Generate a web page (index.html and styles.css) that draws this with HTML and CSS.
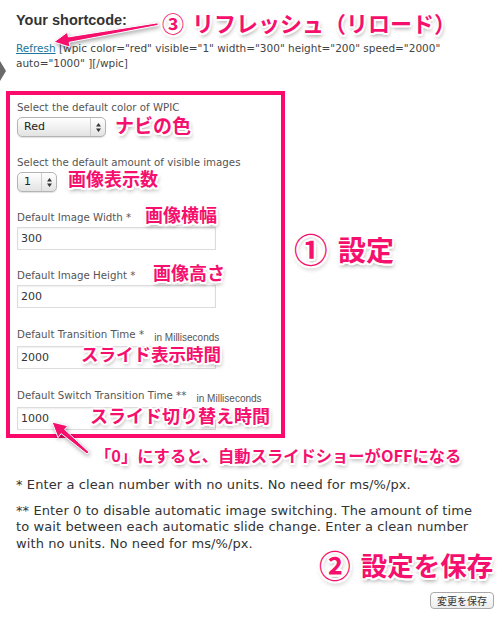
FILE: index.html
```html
<!DOCTYPE html>
<html lang="ja">
<head>
<meta charset="utf-8">
<title>WPIC settings</title>
<link rel="stylesheet" href="styles.css">
</head>
<body>
<div class="page">
  <span class="edge-tab"></span>
  <h3 class="title">Your shortcode:</h3>
  <p class="shortcode"><a href="#">Refresh</a> [wpic color="red" visible="1" width="300" height="200" speed="2000" auto="1000" ][/wpic]</p>

  <div class="settings">
    <div class="field">
      <label class="lbl">Select the default color of WPIC</label>
      <div class="sel sel-color"><span class="sel-val">Red</span><span class="sel-arrows"><svg width="5" height="9" viewBox="0 0 5 9"><path d="M0 3.6 2.5 0 5 3.6Z M0 5.4 2.5 9 5 5.4Z" fill="#333"/></svg></span></div>
    </div>
    <div class="field">
      <label class="lbl">Select the default amount of visible images</label>
      <div class="sel sel-num"><span class="sel-val">1</span><span class="sel-arrows"><svg width="5" height="9" viewBox="0 0 5 9"><path d="M0 3.6 2.5 0 5 3.6Z M0 5.4 2.5 9 5 5.4Z" fill="#333"/></svg></span></div>
    </div>
    <div class="field">
      <label class="lbl">Default Image Width *</label>
      <input class="txt" type="text" value="300">
    </div>
    <div class="field">
      <label class="lbl">Default Image Height *</label>
      <input class="txt" type="text" value="200">
    </div>
    <div class="field">
      <label class="lbl lbl-ms">Default Transition Time * <span class="ms">in Milliseconds</span></label>
      <input class="txt" type="text" value="2000">
    </div>
    <div class="field">
      <label class="lbl lbl-ms">Default Switch Transition Time ** <span class="ms">in Milliseconds</span></label>
      <input class="txt" type="text" value="1000">
    </div>
  </div>

  <p class="help help-first">* Enter a clean number with no units. No need for ms/%/px.</p>
  <p class="help">** Enter 0 to disable automatic image switching. The amount of time to wait between each automatic slide change. Enter a clean number with no units. No need for ms/%/px.</p>

  <div class="actions"><button class="btn" type="button">変更を保存</button></div>

  <svg class="arrows" width="502" height="620" viewBox="0 0 502 620">
    <path d="M158.2 25.3 L69.2 42.3 L70.2 47.2 L54 42 L67.4 32.2 L68.4 36.9 L157.8 22.8 Z"/>
    <path d="M88.9 452 L64.6 429.4 L67.8 425.8 L52 422 L58 437.6 L61.1 433.6 L87.1 454 Z"/>
  </svg>

  <div class="note note-refresh"><span class="num">③</span> リフレッシュ（リロード）</div>
  <div class="note note-navi">ナビの色</div>
  <div class="note note-count">画像表示数</div>
  <div class="note note-width">画像横幅</div>
  <div class="note note-height">画像高さ</div>
  <div class="note note-speed">スライド表示時間</div>
  <div class="note note-switch">スライド切り替え時間</div>
  <div class="note note-big note-setting"><span class="num">①</span> 設定</div>
  <div class="note note-zero">「0」にすると、自動スライドショーがOFFになる</div>
  <div class="note note-big note-save"><span class="num">②</span> 設定を保存</div>
</div>
</body>
</html>
```

FILE: styles.css
```css
html, body {
  margin: 0;
  padding: 0;
  background: #fff;
}

body {
  font-family: "DejaVu Sans", "Noto Sans CJK JP", sans-serif;
  color: #333;
}

.page {
  position: relative;
  width: 502px;
  height: 620px;
  box-sizing: border-box;
  padding: 12px 8px 0 16px;
  overflow: hidden;
}

.edge-tab {
  position: absolute;
  left: 0;
  top: 61px;
  width: 0;
  height: 0;
  border-left: 6px solid #6a6a6a;
  border-top: 10px solid transparent;
  border-bottom: 10px solid transparent;
}

.title {
  margin: 0;
  font-family: "Liberation Sans", Arial, sans-serif;
  font-size: 14.5px;
  line-height: 16px;
  font-weight: bold;
  color: #333;
}

.shortcode {
  margin: 12.5px 0 0;
  font-size: 10.5px;
  line-height: 15px;
  color: #444;
}

.shortcode a {
  color: #21759b;
  text-decoration: underline;
}

.settings {
  margin: 20.5px 0 0 -10px;
  width: 279px;
  box-sizing: border-box;
  border: 4px solid #fc0a6b;
  padding: 5px 0 4px 7px;
}

.field + .field {
  margin-top: 18px;
}

.lbl {
  display: block;
  font-size: 10.25px;
  line-height: 14px;
  height: 14px;
  color: #555;
  margin-bottom: 3px;
  white-space: nowrap;
}

.lbl-ms {
  padding-top: 1px;
  margin-bottom: 5px;
}

.ms {
  font-family: "Liberation Sans", Arial, sans-serif;
  font-size: 10px;
  line-height: 1;
  vertical-align: -3px;
  margin-left: 7px;
}

.sel {
  display: flex;
  height: 20px;
  box-sizing: border-box;
  border: 1px solid #b4b4b4;
  border-radius: 5px;
  background: linear-gradient(#ffffff, #f1f1f1 50%, #e2e2e2);
  box-shadow: 0 1px 1px rgba(0, 0, 0, 0.12);
  font-size: 11px;
  color: #222;
}

.sel-color { width: 89px; }
.sel-num { width: 40px; }

.sel-val {
  flex: 1;
  padding-left: 6px;
  line-height: 18px;
}

.sel-arrows {
  width: 14px;
  border-left: 1px solid #cfcfcf;
  display: flex;
  align-items: center;
  justify-content: center;
}

.sel-arrows svg {
  display: block;
}

.txt {
  display: block;
  width: 199px;
  height: 23px;
  box-sizing: border-box;
  margin: 0;
  padding: 0 3px;
  border: 1px solid #dcdcdc;
  box-shadow: inset 0 1px 2px rgba(0, 0, 0, 0.07);
  font-family: "DejaVu Sans", sans-serif;
  font-size: 11px;
  color: #333;
  background: #fff;
  outline: none;
}

.help {
  margin: 9.5px 0 0;
  padding-right: 5px;
  font-size: 13px;
  line-height: 16.5px;
  letter-spacing: 0.1px;
  color: #333;
}

.help-first {
  margin-top: 38.75px;
}

.actions {
  margin-top: 39.75px;
  display: flex;
  justify-content: flex-end;
}

.btn {
  height: 17px;
  box-sizing: border-box;
  padding: 0 6px;
  margin: 0;
  border: 1px solid #a9a9a9;
  border-radius: 4px;
  background: linear-gradient(#ffffff, #ececec);
  font-family: "Noto Sans CJK JP", sans-serif;
  font-size: 10px;
  line-height: 14px;
  color: #333;
}

.arrows {
  position: absolute;
  left: 0;
  top: 0;
  pointer-events: none;
  fill: #f5106e;
  stroke: #fff;
  stroke-width: 1;
  filter: drop-shadow(1px 2px 2px rgba(0, 0, 0, 0.35));
}

.note {
  position: absolute;
  font-family: "Noto Sans CJK JP", sans-serif;
  font-weight: bold;
  font-size: 18px;
  line-height: 1;
  white-space: nowrap;
  color: #f5106e;
  text-shadow:
    -2px 0 0 #fff, 2px 0 0 #fff, 0 -2px 0 #fff, 0 2px 0 #fff,
    -1.5px -1.5px 0 #fff, 1.5px -1.5px 0 #fff, -1.5px 1.5px 0 #fff, 1.5px 1.5px 0 #fff,
    1px 3px 4px rgba(0, 0, 0, 0.45);
}

.num {
  margin-right: 3px;
}

.note-big .num {
  font-size: 1.2em;
  vertical-align: -2px;
  margin-right: 4px;
}

.note-refresh { left: 162px; top: 11px; font-size: 22px; }
.note-navi { left: 115px; top: 114.5px; font-size: 19px; }
.note-count { left: 68px; top: 168.5px; }
.note-width { left: 145px; top: 205px; }
.note-height { left: 153px; top: 262.5px; }
.note-speed { left: 81px; top: 345px; font-size: 17.5px; }
.note-switch { left: 90px; top: 405.5px; }
.note-zero { left: 95px; top: 447px; font-size: 16.3px; }

.note-big { font-size: 26.5px; }
.note-setting { left: 294px; top: 232px; font-size: 28px; }
.note-save { left: 319px; top: 548.5px; }
```
